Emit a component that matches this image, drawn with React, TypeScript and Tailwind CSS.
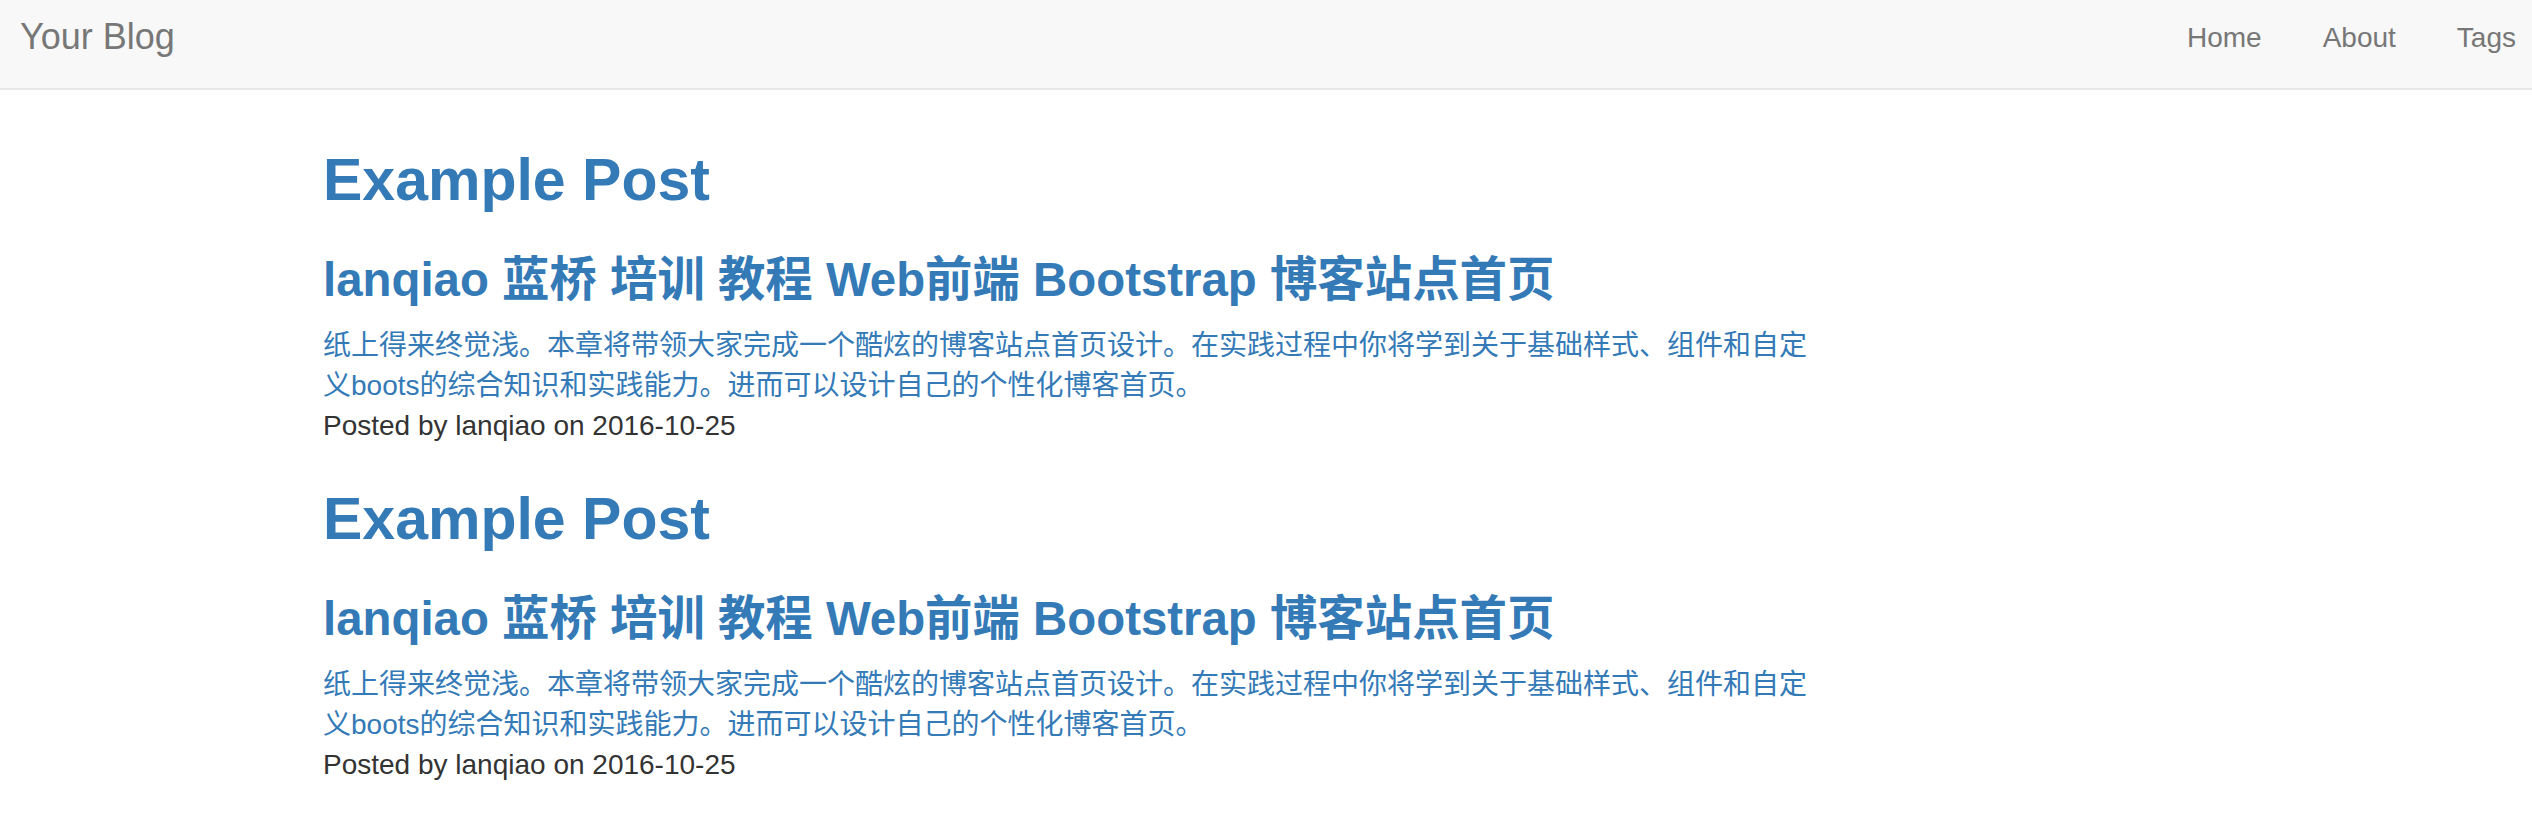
import React from "react";

const posts = [0, 1];

export default function App() {
  return (
    <div className="min-h-screen w-full bg-white font-['Liberation_Sans','Noto_Sans_CJK_SC',sans-serif] text-[#333]">
      <nav className="flex h-[90px] items-start justify-between border-b-2 border-[#e7e7e7] bg-[#f8f8f8]">
        <a className="pl-[20px] pt-[19px] text-[36px] leading-[36px] text-[#777]">Your Blog</a>
        <ul className="flex gap-[61px] pr-[16px] pt-[24px] text-[28px] leading-[28px] text-[#777]">
          <li>Home</li>
          <li>About</li>
          <li>Tags</li>
        </ul>
      </nav>
      <main className="pl-[323px] pt-[57px]">
        <div className="w-[1500px]">
          {posts.map((i) => (
            <div key={i} className="pb-[40px]">
              <h1 className="text-[59px] font-bold leading-[66px] text-[#337ab7]">Example Post</h1>
              <h2 className="mt-[40px] text-[47.4px] font-bold leading-[53px] text-[#337ab7]">
                lanqiao 蓝桥 培训 教程 Web前端 Bootstrap 博客站点首页
              </h2>
              <p className="mt-[20px] text-[28px] leading-[40px] text-[#337ab7]">
                纸上得来终觉浅。本章将带领大家完成一个酷炫的博客站点首页设计。在实践过程中你将学到关于基础样式、组件和自定义boots的综合知识和实践能力。进而可以设计自己的个性化博客首页。
              </p>
              <p className="text-[28px] leading-[40px] text-[#333]">Posted by lanqiao on 2016-10-25</p>
            </div>
          ))}
        </div>
      </main>
    </div>
  );
}
